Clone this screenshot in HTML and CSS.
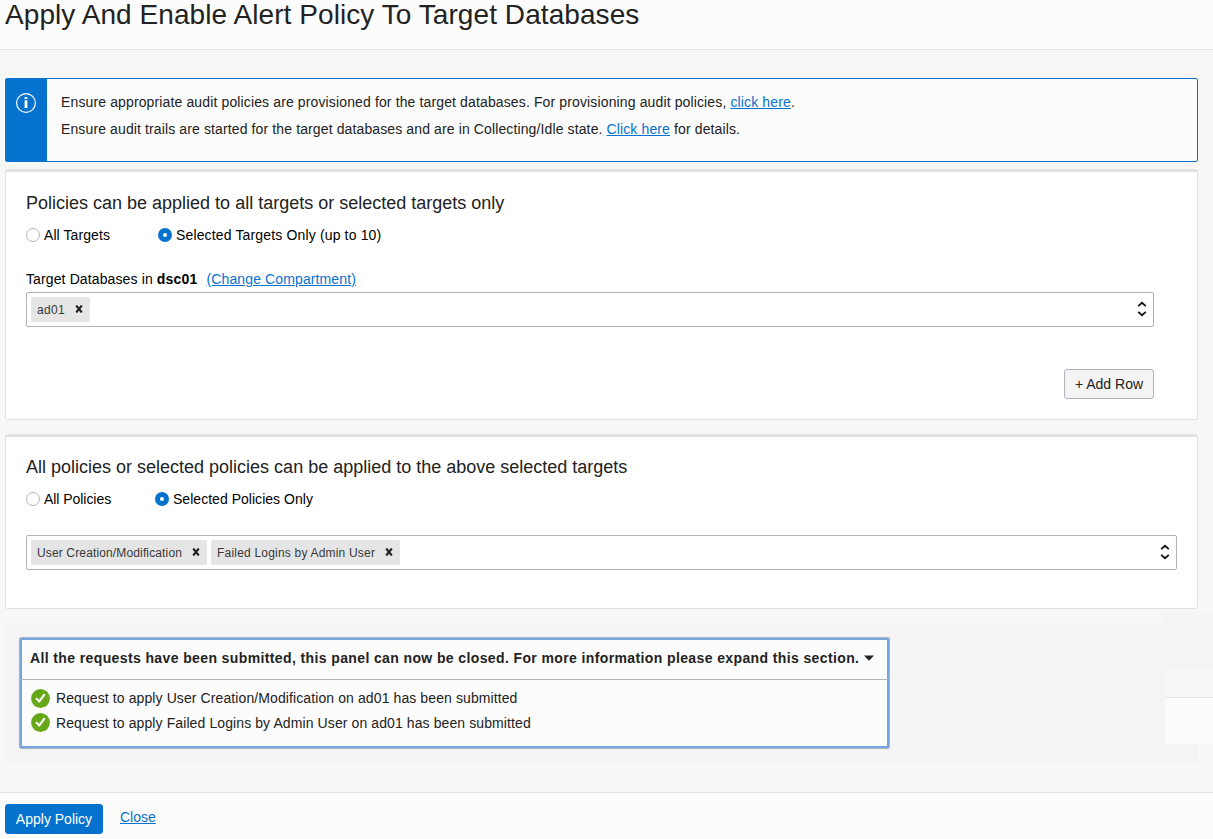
FILE: index.html
```html
<!DOCTYPE html>
<html lang="en">
<head>
<meta charset="utf-8">
<title>Apply And Enable Alert Policy To Target Databases</title>
<link rel="stylesheet" href="styles.css">
</head>
<body>
<header class="page-header"><h1 class="title">Apply And Enable Alert Policy To Target Databases</h1></header>
<main class="content">
  <section class="info">
    <div class="info-side">
      <svg width="22" height="22" viewBox="0 0 22 22"><circle cx="11" cy="11" r="9.4" fill="none" stroke="#fff" stroke-width="1.2"/><path d="M9.6 5h2.8v2H9.6zM9.6 8.2h2.8V16H9.6z" fill="#fff"/></svg>
    </div>
    <div class="info-text">
      <p class="line">Ensure appropriate audit policies are provisioned for the target databases. For provisioning audit policies, <a class="link" href="#">click here</a>.</p>
      <p class="line second">Ensure audit trails are started for the target databases and are in Collecting/Idle state. <a class="link" href="#">Click here</a> for details.</p>
    </div>
  </section>

  <section class="card targets">
    <h2 class="heading">Policies can be applied to all targets or selected targets only</h2>
    <div class="radios">
      <label class="option first"><span class="radio"></span>All Targets</label>
      <label class="option"><span class="radio on"></span>Selected Targets Only (up to 10)</label>
    </div>
    <div class="field-label"><span>Target Databases in <b class="dsc">dsc01</b></span><a class="link" href="#">(Change Compartment)</a></div>
    <div class="select">
      <span class="chip"><span>ad01</span><svg class="x" width="8" height="8" viewBox="0 0 8 8"><path d="M1.2 .5 6.8 7.5M6.8 .5 1.2 7.5"/></svg></span>
      <svg class="updown" width="10" height="16" viewBox="0 0 10 16"><path d="M1.2 5.2 5 1.8 8.8 5.2M1.2 10.8 5 14.2 8.8 10.8"/></svg>
    </div>
    <div class="actions"><button class="button add">+ Add Row</button></div>
  </section>

  <section class="card policies">
    <h2 class="heading">All policies or selected policies can be applied to the above selected targets</h2>
    <div class="radios">
      <label class="option first"><span class="radio"></span>All Policies</label>
      <label class="option"><span class="radio on"></span>Selected Policies Only</label>
    </div>
    <div class="select">
      <span class="chip c1"><span>User Creation/Modification</span><svg class="x" width="8" height="8" viewBox="0 0 8 8"><path d="M1.2 .5 6.8 7.5M6.8 .5 1.2 7.5"/></svg></span>
      <span class="chip c2"><span>Failed Logins by Admin User</span><svg class="x" width="8" height="8" viewBox="0 0 8 8"><path d="M1.2 .5 6.8 7.5M6.8 .5 1.2 7.5"/></svg></span>
      <svg class="updown" width="10" height="16" viewBox="0 0 10 16"><path d="M1.2 5.2 5 1.8 8.8 5.2M1.2 10.8 5 14.2 8.8 10.8"/></svg>
    </div>
  </section>

  <section class="status">
    <div class="panel">
      <div class="panel-head"><span class="panel-title">All the requests have been submitted, this panel can now be closed. For more information please expand this section.</span><svg width="10" height="6" viewBox="0 0 10 6"><path d="M0 .5h10L5 5.7z" fill="#222"/></svg></div>
      <ul class="results">
        <li class="result"><svg class="ok" width="19" height="19" viewBox="0 0 19 19"><circle cx="9.5" cy="9.5" r="9.4" fill="#67a71a"/><path d="M5 9.2 8.3 12.4 13.7 5.2" fill="none" stroke="#fff" stroke-width="2.1"/></svg><span>Request to apply User Creation/Modification on ad01 has been submitted</span></li>
        <li class="result"><svg class="ok last" width="19" height="19" viewBox="0 0 19 19"><circle cx="9.5" cy="9.5" r="9.4" fill="#67a71a"/><path d="M5 9.2 8.3 12.4 13.7 5.2" fill="none" stroke="#fff" stroke-width="2.1"/></svg><span>Request to apply Failed Logins by Admin User on ad01 has been submitted</span></li>
      </ul>
    </div>
  </section>
</main>
<div class="edge-overlay"></div>
<footer class="footer"><button class="button primary">Apply Policy</button><a class="link close" href="#">Close</a></footer>
</body>
</html>
```
FILE: styles.css
```css
* { box-sizing: border-box; }
body { margin: 0; height: 839px; overflow: hidden; position: relative; display: flex; flex-direction: column; background: #f7f7f7; color: #222; font: 14px/20px "Liberation Sans", Arial, sans-serif; }
h1, h2, p, ul { margin: 0; padding: 0; font-weight: normal; }
svg { display: block; flex: none; }
.page-header { height: 50px; flex: none; background: #fcfcfc; border-bottom: 1px solid #e3e3e5; padding-left: 5px; }
.title { font-size: 28px; line-height: 30px; letter-spacing: .07px; white-space: nowrap; }
.content { flex: 1; padding: 28px 15px 0 5px; display: flex; flex-direction: column; }
.link { color: #0572ce; text-decoration: underline; }
.info { height: 84px; flex: none; display: flex; border: 1px solid #0572ce; border-radius: 2px; background: #fcfcfc; margin-bottom: 7px; }
.info-side { width: 41px; background: #0572ce; padding: 13px 0 0 9px; }
.info-text { padding: 10px 0 0 14px; }
.line { line-height: 27px; letter-spacing: .13px; white-space: nowrap; }
.line.second { letter-spacing: .12px; }
.card { flex: none; background: #fff; border: 1px solid #e1e1e5; border-top-width: 3px; border-radius: 3px; padding: 20px; }
.targets { height: 251px; margin-bottom: 14px; padding-right: 43px; }
.policies { height: 175px; margin-bottom: 14px; padding-top: 19px; }
.heading { font-size: 18px; line-height: 22px; white-space: nowrap; }
.radios { display: flex; margin-top: 11px; height: 20px; color: #000; letter-spacing: .15px; }
.policies .radios { letter-spacing: .03px; }
.option { display: flex; align-items: center; gap: 4px; white-space: nowrap; }
.first { width: 132px; letter-spacing: .08px; }
.policies .first { width: 129px; letter-spacing: -.05px; }
.radio { width: 14px; height: 14px; border: 1px solid #b1b6be; border-radius: 50%; background: #fff; }
.radio.on { border: 5px solid #0572ce; }
.field-label { display: flex; gap: 9px; margin-top: 24px; color: #000; line-height: 20px; letter-spacing: .12px; }
.dsc { letter-spacing: .2px; }
.select { margin-top: 3px; height: 35px; border: 1px solid #aeb3bc; border-radius: 2px; background: #fff; display: flex; align-items: center; gap: 4px; padding: 0 6px 0 4px; }
.policies .select { margin-top: 26px; }
.chip { height: 25px; width: 59px; display: flex; align-items: center; justify-content: space-between; padding: 0 7px 0 6px; background: #e5e5e5; border-radius: 2px; font-size: 12px; letter-spacing: .3px; color: #383838; white-space: nowrap; }
.c1 { width: 176px; letter-spacing: .14px; }
.c2 { width: 189px; letter-spacing: .2px; }
.x { margin-bottom: 1px; }
.x path { fill: none; stroke: #222; stroke-width: 2.1; }
.updown { margin-left: auto; margin-bottom: 1px; }
.updown path { fill: none; stroke: #111; stroke-width: 1.8; }
.actions { display: flex; justify-content: flex-end; margin-top: 42px; }
.button { font: inherit; color: #222; height: 30px; border: 1px solid #aeb3bc; border-radius: 3px; background: #f4f4f4; padding: 0; white-space: nowrap; }
.add { width: 90px; }
.status { height: 140px; flex: none; background: #f4f4f4; padding: 14px; }
.panel { width: 871px; height: 112px; border: 1px solid #a9b3c0; border-radius: 2px; background: #fcfcfc; box-shadow: inset 0 0 0 2px #75a6e1; }
.panel-head { height: 42px; display: flex; align-items: center; gap: 5px; padding: 0 0 1px 10px; border-bottom: 1px solid #aeb3bc; }
.panel-title { font-weight: bold; letter-spacing: .383px; white-space: nowrap; }
.results { list-style: none; padding: 8px 0 0 11px; }
.result { height: 25px; display: flex; gap: 6px; letter-spacing: .1px; white-space: nowrap; }
.ok { margin-top: 1px; }
.ok.last { margin-top: 0; }
.footer { height: 47px; flex: none; display: flex; align-items: flex-start; padding: 11px 0 0 5px; background: #fcfcfc; border-top: 1px solid #e3e3e5; }
.primary { width: 98px; color: #fff; background: #0572ce; border-color: #0572ce; }
.close { margin: 3px 0 0 17px; }
.edge-overlay { position: absolute; left: 1165px; top: 613px; width: 48px; height: 131px; background: linear-gradient(#f4f4f4 0 55px, #f7f7f7 55px 84px, #e5e5e5 84px 85px, #fcfcfc 85px); }
```
